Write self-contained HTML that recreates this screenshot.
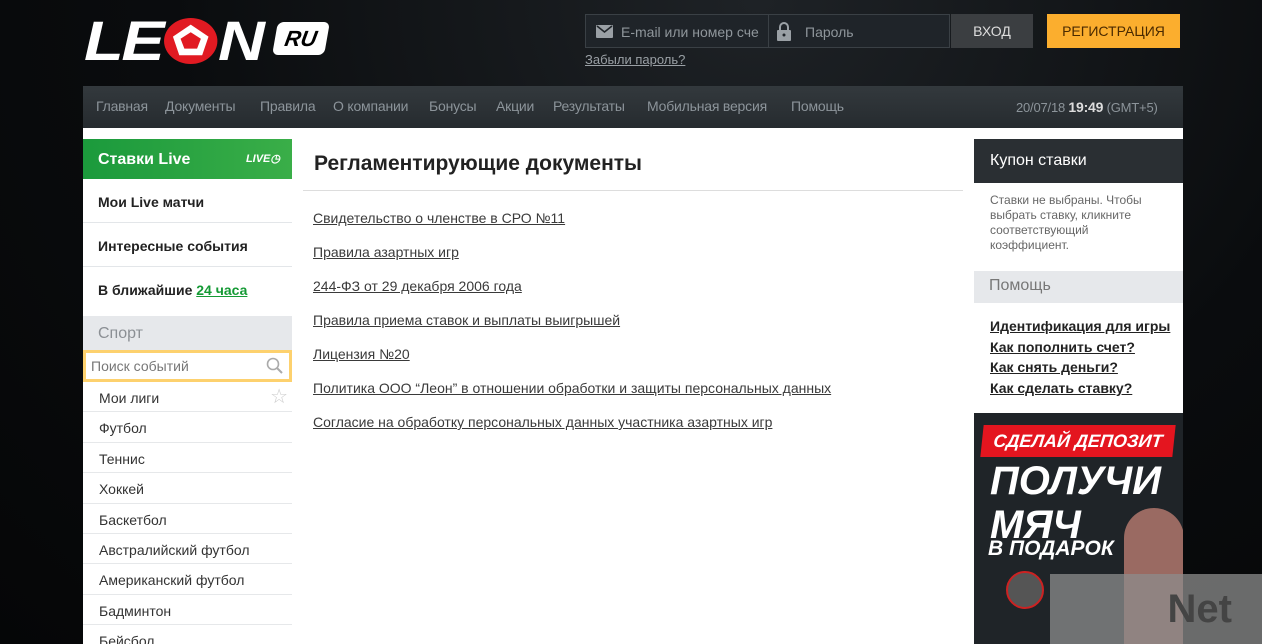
<!DOCTYPE html>
<html style="overflow:hidden;height:644px"><head><meta charset="utf-8"><style>
*{margin:0;padding:0;box-sizing:border-box}
body{width:1262px;height:644px;overflow:hidden;background:radial-gradient(ellipse at 60% 0%,#1e2226 0%,#0a0c0e 55%,#050607 100%);font-family:"Liberation Sans",sans-serif;position:relative}
.abs{position:absolute}
.nav{left:83px;top:86px;width:1100px;height:42px;background:linear-gradient(#33393d,#262b2f);color:#8c949a;font-size:14px}
.nav span{position:absolute;top:12px;letter-spacing:-0.2px}
.main{left:83px;top:128px;width:1100px;height:516px;background:#fff}
.lc{left:83px;top:139px;width:209px;height:505px;overflow:hidden}
.row{height:44px;border-bottom:1px solid #e3e6e9;font-size:14px;font-weight:bold;color:#222;padding:15px 15px 0}
.sp{height:30.4px;border-bottom:1px solid #e6e8ea;font-size:14px;color:#333;padding:8px 16px 0}
.doc{left:313px;font-size:14px;color:#3a3a3a;text-decoration:underline}
</style></head><body>
<div class="abs" style="left:84px;top:13px;font:italic 900 56px/56px 'Liberation Sans',sans-serif;color:#fff;letter-spacing:-2px;transform:scaleX(1.16);transform-origin:left top;white-space:nowrap">LE<span style="display:inline-block;width:46px;height:46px;border-radius:50%;background:#e11a22;vertical-align:-4px;position:relative;margin:0 1px"><svg width="46" height="46" viewBox="0 0 42 42" style="position:absolute;left:0;top:0"><polygon points="21,6 35,17 30,34 12,34 7,17" fill="#fff"/><polygon points="21,13 29,19 26,28 16,28 13,19" fill="#e11a22"/></svg></span>N</div>
<div class="abs" style="left:275px;top:22px;width:52px;height:33px;background:#fff;border-radius:6px;transform:skewX(-10deg);color:#000;font:italic 900 22px/33px 'Liberation Sans',sans-serif;text-align:center">RU</div>
<div class="abs" style="left:585px;top:14px;width:365px;height:34px;background:#1f2429;border:1px solid #3a4045"></div>
<div class="abs" style="left:768px;top:14px;width:1px;height:34px;background:#3a4045"></div>
<svg class="abs" style="left:596px;top:25px" width="17" height="13"><rect width="17" height="13" rx="1" fill="#9aa0a5"/><path d="M1 1 8.5 7 16 1" stroke="#1f2429" stroke-width="1.6" fill="none"/></svg>
<div class="abs" style="left:621px;top:24px;color:#8f969b;font-size:14px">E-mail или номер сче</div>
<svg class="abs" style="left:777px;top:21px" width="14" height="20"><path d="M3 9V6a4 4 0 0 1 8 0v3" stroke="#9aa0a5" stroke-width="2" fill="none"/><rect y="9" width="14" height="11" rx="1" fill="#9aa0a5"/><circle cx="7" cy="14" r="1.5" fill="#1f2429"/></svg>
<div class="abs" style="left:805px;top:24px;color:#8f969b;font-size:14px">Пароль</div>
<div class="abs" style="left:951px;top:14px;width:82px;height:34px;background:#3b3e41;color:#ddd;font-size:14px;text-align:center;line-height:34px">ВХОД</div>
<div class="abs" style="left:1047px;top:14px;width:133px;height:34px;background:#fbae2e;color:#4a2a00;font-size:14px;text-align:center;line-height:34px">РЕГИСТРАЦИЯ</div>
<div class="abs" style="left:585px;top:52px;color:#9aa0a5;font-size:13px;text-decoration:underline">Забыли пароль?</div>
<div class="abs nav"><span style="left:13px">Главная</span><span style="left:82px">Документы</span><span style="left:177px">Правила</span><span style="left:250px">О компании</span><span style="left:346px">Бонусы</span><span style="left:413px">Акции</span><span style="left:470px">Результаты</span><span style="left:564px">Мобильная версия</span><span style="left:708px">Помощь</span><span style="left:933px;font-size:13px;top:13px">20/07/18 <b style="color:#ddd;font-size:14px">19:49</b> (GMT+5)</span></div>
<div class="abs main"></div>
<div class="abs lc">
<div style="height:40px;background:linear-gradient(90deg,#1b9a3c,#3aae48);color:#fff;font-size:16px;font-weight:bold;padding:12px 15px 0;position:relative">Ставки Live<span style="position:absolute;right:12px;top:13px;font:italic bold 11px 'Liberation Sans',sans-serif">LIVE◷</span></div>
<div class="row">Мои Live матчи</div>
<div class="row">Интересные события</div>
<div class="row" style="height:49px;border:none;padding-top:15px">В ближайшие <span style="color:#159a35;text-decoration:underline">24 часа</span></div>
<div style="height:34px;background:#e6e8eb;color:#8b8f94;font-size:16px;padding:9px 15px 0">Спорт</div>
<div style="height:32px;border:3px solid #fdd16e;font-size:14px;color:#777;padding:5px 5px;position:relative">Поиск событий<svg style="position:absolute;right:5px;top:4px" width="18" height="18"><circle cx="7" cy="7" r="5.5" stroke="#aaa" stroke-width="1.6" fill="none"/><path d="M11 11 16 16" stroke="#aaa" stroke-width="2"/></svg></div>
<div class="sp" style="position:relative">Мои лиги<span style="position:absolute;right:4px;top:2px;color:#ccc;font-size:20px">☆</span></div>
<div class="sp">Футбол</div><div class="sp">Теннис</div><div class="sp">Хоккей</div><div class="sp">Баскетбол</div><div class="sp">Австралийский футбол</div><div class="sp">Американский футбол</div><div class="sp">Бадминтон</div><div class="sp">Бейсбол</div>
</div>
<div class="abs" style="left:314px;top:152px;font-size:21px;font-weight:bold;color:#222">Регламентирующие документы</div>
<div class="abs" style="left:303px;top:190px;width:660px;height:1px;background:#ddd"></div>
<div class="abs doc" style="top:210px">Свидетельство о членстве в СРО №11</div>
<div class="abs doc" style="top:244px">Правила азартных игр</div>
<div class="abs doc" style="top:278px">244-ФЗ от 29 декабря 2006 года</div>
<div class="abs doc" style="top:312px">Правила приема ставок и выплаты выигрышей</div>
<div class="abs doc" style="top:346px">Лицензия №20</div>
<div class="abs doc" style="top:380px">Политика ООО “Леон” в отношении обработки и защиты персональных данных</div>
<div class="abs doc" style="top:414px">Согласие на обработку персональных данных участника азартных игр</div>
<div class="abs" style="left:974px;top:139px;width:209px;height:44px;background:#2a2f33;color:#fff;font-size:16px;padding:13px 16px 0">Купон ставки</div>
<div class="abs" style="left:990px;top:193px;width:180px;font-size:12px;line-height:15px;color:#666">Ставки не выбраны. Чтобы выбрать ставку, кликните соответствующий коэффициент.</div>
<div class="abs" style="left:974px;top:271px;width:209px;height:32px;background:#e6e8eb;color:#777;font-size:16px;padding:6px 15px 0">Помощь</div>
<div class="abs" style="left:990px;top:316px;font-size:14px;line-height:20.7px;font-weight:bold;color:#222;text-decoration:underline">Идентификация для игры<br>Как пополнить счет?<br>Как снять деньги?<br>Как сделать ставку?</div>
<div class="abs" style="left:974px;top:413px;width:209px;height:231px;background:#1f2428;overflow:hidden">
<div style="position:absolute;left:8px;top:12px;width:192px;height:32px;background:#e4151f;transform:skewX(-6deg);color:#fff;font:italic 900 18px/32px 'Liberation Sans',sans-serif;text-align:center">СДЕЛАЙ ДЕПОЗИТ</div>
<div style="position:absolute;left:150px;top:95px;width:60px;height:136px;background:#9a6a62;border-radius:30px 30px 0 0"></div>
<div style="position:absolute;left:16px;top:46px;color:#fff;font:italic 900 40px/44px 'Liberation Sans',sans-serif">ПОЛУЧИ<br>МЯЧ</div>
<div style="position:absolute;left:14px;top:124px;color:#fff;font:italic 900 21px 'Liberation Sans',sans-serif">В ПОДАРОК</div>
<div style="position:absolute;left:32px;top:158px;width:38px;height:38px;border-radius:50%;background:#555;border:2px solid #c22"></div>
</div>
<div class="abs" style="left:1050px;top:574px;width:212px;height:70px;background:rgba(140,140,140,.75);color:#444;font:bold 40px/70px 'Liberation Sans',sans-serif;text-align:right;padding-right:30px">Net</div>
</body></html>
